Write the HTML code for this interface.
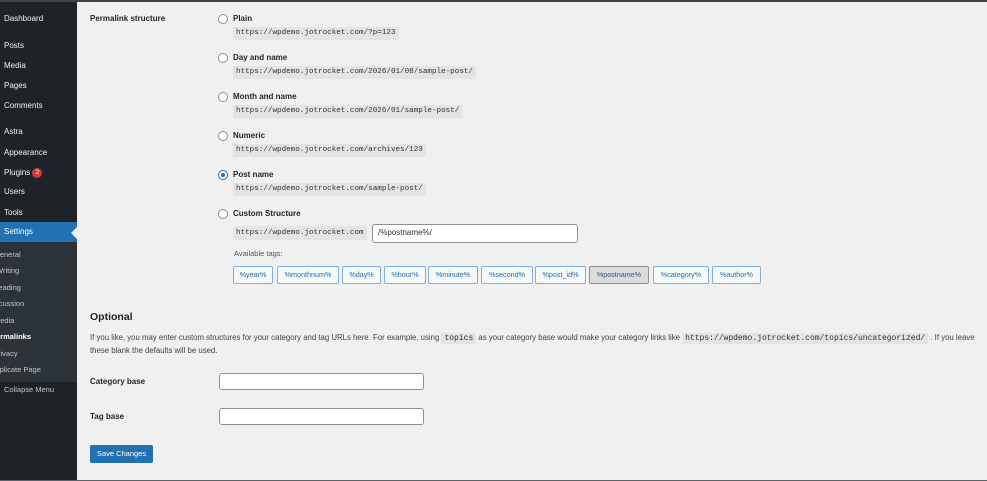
<!DOCTYPE html>
<html><head><meta charset="utf-8"><style>
*{margin:0;padding:0;box-sizing:border-box}
body{width:987px;height:481px;background:#f0f0f1;font-family:"Liberation Sans",sans-serif;color:#1d2327;position:relative;overflow:hidden}
.a{position:absolute;white-space:nowrap}
#top{left:0;top:0;width:987px;height:2px;background:#3c434a}
#bot{left:0;bottom:0;width:987px;height:1px;background:#5b646c}
#side{left:0;top:2px;width:77px;height:478px;background:#1d2327}
.m{position:absolute;left:4px;font-size:8px;color:#f0f0f1}
.s{position:absolute;font-size:7.5px;color:#c3c4c7}
.b{font-weight:bold;font-size:8px}
.r{position:absolute;left:218px;width:10px;height:10px;border:1px solid #8c8f94;border-radius:50%;background:#fff}
.l{position:absolute;left:233px;font-size:8px;font-weight:bold;color:#1d2327}
code{position:absolute;font-family:"Liberation Mono",monospace;font-size:7.6px;background:#e4e4e5;padding:2px 3px 3px;color:#2c3338;white-space:nowrap}
.t{position:absolute;top:266px;height:18px;border:1px solid #7fb1db;background:#f6f7f7;color:#2271b1;font-size:7.2px;text-align:center;line-height:16px;border-radius:2px}
input{position:absolute;background:#fff;border:1px solid #8c8f94;border-radius:3px}
.p{font-size:7.8px;color:#3c434a}
</style></head><body>
<div class="a" id="top"></div>
<div class="a" id="side">
<div class="m" style="top:12px">Dashboard</div>
<div class="m" style="top:39px">Posts</div>
<div class="m" style="top:59px">Media</div>
<div class="m" style="top:79px">Pages</div>
<div class="m" style="top:99px">Comments</div>
<div class="m" style="top:125px">Astra</div>
<div class="m" style="top:146px">Appearance</div>
<div class="m" style="top:166px">Plugins <span style="display:inline-block;width:10px;height:10px;border-radius:50%;background:#d63638;color:#fff;font-size:6.5px;text-align:center;line-height:10px;vertical-align:middle">2</span></div>
<div class="m" style="top:185px">Users</div>
<div class="m" style="top:206px">Tools</div>
<div style="position:absolute;left:0;top:220px;width:77px;height:20px;background:#2271b1"></div>
<div class="m" style="top:225px;color:#fff">Settings</div>
<div style="position:absolute;left:71px;top:225px;width:0;height:0;border-top:6px solid transparent;border-bottom:6px solid transparent;border-right:6px solid #f0f0f1"></div>
<div style="position:absolute;left:0;top:240px;width:77px;height:140px;background:#2c3338">
<div class="s" style="left:-6px;top:8px">General</div>
<div class="s" style="left:-4px;top:24px">Writing</div>
<div class="s" style="left:-7px;top:41px">Reading</div>
<div class="s" style="left:-12px;top:57px">Discussion</div>
<div class="s" style="left:-6px;top:74px">Media</div>
<div class="s" style="left:-9px;top:90px;color:#fff;font-weight:bold">Permalinks</div>
<div class="s" style="left:-7px;top:107px">Privacy</div>
<div class="s" style="left:-10px;top:123px">Duplicate Page</div>
</div>
<div class="s" style="left:4px;top:383px">Collapse Menu</div>
</div>

<div class="a b" style="left:90px;top:14px">Permalink structure</div>

<div class="r" style="top:14px"></div><div class="l" style="top:14px">Plain</div>
<code style="left:233px;top:27px">https://wpdemo.jotrocket.com/?p=123</code>
<div class="r" style="top:53px"></div><div class="l" style="top:53px">Day and name</div>
<code style="left:233px;top:66px">https://wpdemo.jotrocket.com/2026/01/08/sample-post/</code>
<div class="r" style="top:92px"></div><div class="l" style="top:92px">Month and name</div>
<code style="left:233px;top:105px">https://wpdemo.jotrocket.com/2026/01/sample-post/</code>
<div class="r" style="top:131px"></div><div class="l" style="top:131px">Numeric</div>
<code style="left:233px;top:144px">https://wpdemo.jotrocket.com/archives/123</code>
<div class="r" style="top:170px;border-color:#2271b1;display:flex;align-items:center;justify-content:center"><div style="width:4px;height:4px;border-radius:50%;background:#2271b1"></div></div><div class="l" style="top:170px">Post name</div>
<code style="left:233px;top:183px">https://wpdemo.jotrocket.com/sample-post/</code>
<div class="r" style="top:209px"></div><div class="l" style="top:209px">Custom Structure</div>
<code style="left:233px;top:226px;padding:3px 3px">https://wpdemo.jotrocket.com</code>
<input style="left:372px;top:224px;width:206px;height:19px">
<div class="a" style="left:378px;top:228px;font-size:8px;color:#2c3338">/%postname%/</div>
<div class="a" style="left:234px;top:249px;font-size:7.5px;color:#50575e">Available tags:</div>

<div class="t" style="left:233px;width:40px">%year%</div>
<div class="t" style="left:277px;width:62px">%monthnum%</div>
<div class="t" style="left:342px;width:39px">%day%</div>
<div class="t" style="left:384px;width:42px">%hour%</div>
<div class="t" style="left:428px;width:50px">%minute%</div>
<div class="t" style="left:481px;width:52px">%second%</div>
<div class="t" style="left:535px;width:51px">%post_id%</div>
<div class="t" style="left:589px;width:60px;background:#dcdcde;border-color:#8c8f94;color:#2c5b86">%postname%</div>
<div class="t" style="left:653px;width:56px">%category%</div>
<div class="t" style="left:712px;width:49px">%author%</div>

<div class="a" style="left:90px;top:311px;font-size:10.5px;font-weight:bold">Optional</div>
<div class="a p" style="left:90px;top:333px">If you like, you may enter custom structures for your category and tag URLs here. For example, using <code style="position:relative;padding:1px 3px;font-size:8px">topics</code> as your category base would make your category links like <code style="position:relative;padding:1px 3px;font-size:8px">https://wpdemo.jotrocket.com/topics/uncategorized/</code> . If you leave</div>
<div class="a p" style="left:90px;top:346px">these blank the defaults will be used.</div>

<div class="a b" style="left:90px;top:377px">Category base</div>
<input style="left:219px;top:373px;width:205px;height:17px">
<div class="a b" style="left:90px;top:412px">Tag base</div>
<input style="left:219px;top:408px;width:205px;height:17px">

<div class="a" style="left:90px;top:445px;width:63px;height:18px;background:#2271b1;border-radius:2px;color:#fff;font-size:7.5px;text-align:center;line-height:18px">Save Changes</div>
<div class="a" id="bot"></div>
</body></html>
